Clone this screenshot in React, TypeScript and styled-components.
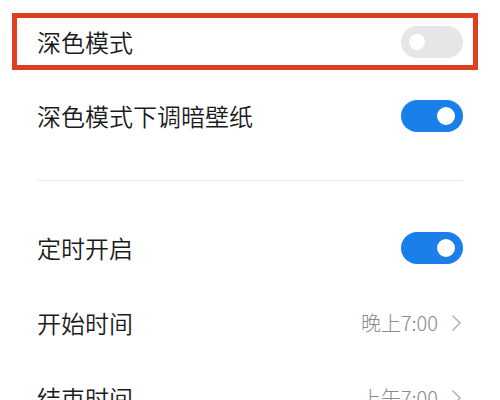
import styled, { createGlobalStyle } from "styled-components"

const GlobalStyle = createGlobalStyle`
  html, body {
    margin: 0;
    padding: 0;
    background: #ffffff;
  }
  body {
    font-family: "Noto Sans CJK SC", "Noto Sans", sans-serif;
    overflow: hidden;
  }
`

const Page = styled.main`
  width: 500px;
  height: 400px;
  overflow: hidden;
  box-sizing: border-box;
  padding: 13px 37px 0 37px;
`

const Row = styled.div`
  display: flex;
  align-items: center;
  justify-content: space-between;
  height: 75px;
`

const HighlightRow = styled.div`
  display: flex;
  align-items: center;
  justify-content: space-between;
  box-sizing: border-box;
  height: 57px;
  margin: 0 -15px 8px -25px;
  padding: 0 10px 0 20px;
  border: 5px solid #df3e1f;
`

const Label = styled.span`
  font-size: 24px;
  font-weight: 350;
  line-height: 1;
  color: #1b1b1b;
`

const Divider = styled.hr`
  border: none;
  height: 1px;
  background: #ececec;
  margin: 27px 0 29px;
`

const Track = styled.span<{ $on: boolean }>`
  position: relative;
  display: inline-block;
  width: 62px;
  height: 32px;
  border-radius: 16px;
  background: ${(p) => (p.$on ? "#1a7fe8" : "#e6e6e8")};
`

const Knob = styled.span<{ $on: boolean }>`
  position: absolute;
  top: 50%;
  width: ${(p) => (p.$on ? 18 : 16)}px;
  height: ${(p) => (p.$on ? 18 : 16)}px;
  margin-top: ${(p) => (p.$on ? -9 : -8)}px;
  border-radius: 50%;
  background: #ffffff;
  ${(p) => (p.$on ? "right: 8px;" : "left: 8px;")}
`

const Value = styled.span`
  display: flex;
  align-items: center;
  gap: 13px;
  font-size: 20px;
  font-weight: 300;
  color: #8a8a8a;
  margin-right: 1px;
`

function Toggle({ on }: { on: boolean }) {
  return (
    <Track $on={on}>
      <Knob $on={on} />
    </Track>
  )
}

function Chevron() {
  return (
    <svg width="11" height="18" viewBox="0 0 11 18" fill="none">
      <path d="M1.5 1.5 L9 9 L1.5 16.5" stroke="#b3b3b3" strokeWidth="1.5" />
    </svg>
  )
}

export default function App() {
  return (
    <>
      <GlobalStyle />
      <Page>
        <HighlightRow>
          <Label>深色模式</Label>
          <Toggle on={false} />
        </HighlightRow>
        <Row>
          <Label>深色模式下调暗壁纸</Label>
          <Toggle on />
        </Row>
        <Divider />
        <Row>
          <Label>定时开启</Label>
          <Toggle on />
        </Row>
        <Row>
          <Label>开始时间</Label>
          <Value>
            晚上7:00
            <Chevron />
          </Value>
        </Row>
        <Row>
          <Label>结束时间</Label>
          <Value>
            上午7:00
            <Chevron />
          </Value>
        </Row>
      </Page>
    </>
  )
}
